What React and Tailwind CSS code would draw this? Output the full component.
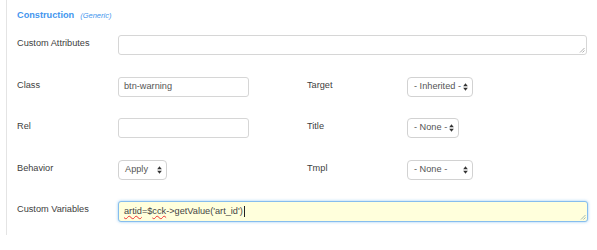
import React from "react";

const font = { fontFamily: '"Liberation Sans", Arial, sans-serif' };

function Arrows({ className = "" }) {
  return (
    <svg width="5" height="8" viewBox="0 0 5 8" className={className}>
      <path d="M2.5 0.3 L4.8 3.3 L0.2 3.3 Z" fill="#333" />
      <path d="M2.5 7.7 L4.8 4.7 L0.2 4.7 Z" fill="#333" />
    </svg>
  );
}

function Grip({ color = "#9a9a9a" }) {
  return (
    <svg width="6" height="6" viewBox="0 0 6 6" className="absolute right-[1px] bottom-[1px]">
      <path d="M5.5 1 L1 5.5 M5.5 3.5 L3.5 5.5" stroke={color} strokeWidth="0.8" />
    </svg>
  );
}

function Label({ children, w = "w-[101px]" }) {
  return <div className={`${w} shrink-0 pt-[2px] text-[9.2px] leading-[12px] text-[#404040]`}>{children}</div>;
}

function Select({ text, w }) {
  return (
    <div className={`${w} h-[20px] flex items-center justify-between pl-[6px] pr-[4px] rounded-[4px] border border-[#d2d2d2] bg-white text-[9.2px] text-[#555]`}>
      <span>{text}</span>
      <Arrows />
    </div>
  );
}

export default function App() {
  return (
    <div className="w-[597px] h-[250px] bg-white" style={font}>
      <div className="ml-[6px] h-[235px] border-l border-[#e4e4e4] pl-[10px] pt-[9px]">
        <div className="flex items-baseline h-[12px] leading-[12px]">
          <span className="text-[9.2px] font-bold text-[#4496ee]">Construction</span>
          <span className="ml-[6px] text-[7.5px] italic text-[#4496ee]">(Generic)</span>
        </div>

        <div className="flex items-start mt-[14px]">
          <Label>Custom Attributes</Label>
          <div className="relative w-[469px] h-[20px] rounded-[3px] border border-[#d6d6d6] bg-white">
            <Grip />
          </div>
        </div>

        <div className="flex items-start mt-[22px]">
          <Label>Class</Label>
          <div className="w-[189px] shrink-0">
            <div className="w-[131px] h-[20px] flex items-center pl-[5px] rounded-[3px] border border-[#d6d6d6] text-[9.2px] text-[#555]">
              btn-warning
            </div>
          </div>
          <Label w="w-[100px]">Target</Label>
          <Select text="- Inherited -" w="w-[66px]" />
        </div>

        <div className="flex items-start mt-[21px]">
          <Label>Rel</Label>
          <div className="w-[189px] shrink-0">
            <div className="w-[131px] h-[20px] rounded-[3px] border border-[#d6d6d6]" />
          </div>
          <Label w="w-[100px]">Title</Label>
          <Select text="- None -" w="w-[52px]" />
        </div>

        <div className="flex items-start mt-[22px]">
          <Label>Behavior</Label>
          <div className="w-[189px] shrink-0">
            <Select text="Apply" w="w-[49px]" />
          </div>
          <Label w="w-[100px]">Tmpl</Label>
          <Select text="- None -" w="w-[66px]" />
        </div>

        <div className="flex items-start mt-[21px]">
          <Label>Custom Variables</Label>
          <div className="relative w-[470px] h-[21px] flex items-center pl-[5px] rounded-[3px] border border-[#86bdee] bg-[#ffffdc] shadow-[0_0_3px_rgba(82,168,236,0.6)] text-[9.2px] text-[#444]">
            <span className="underline decoration-wavy decoration-[#e33] decoration-[0.6px] underline-offset-[1px]">artid</span>
            <span>=$</span>
            <span className="underline decoration-wavy decoration-[#e33] decoration-[0.6px] underline-offset-[1px]">cck</span>
            <span>-&gt;getValue('art_id')</span>
            <span className="ml-[1px] w-px h-[11px] bg-[#222]" />
            <Grip color="#8aa" />
          </div>
        </div>
      </div>
    </div>
  );
}
